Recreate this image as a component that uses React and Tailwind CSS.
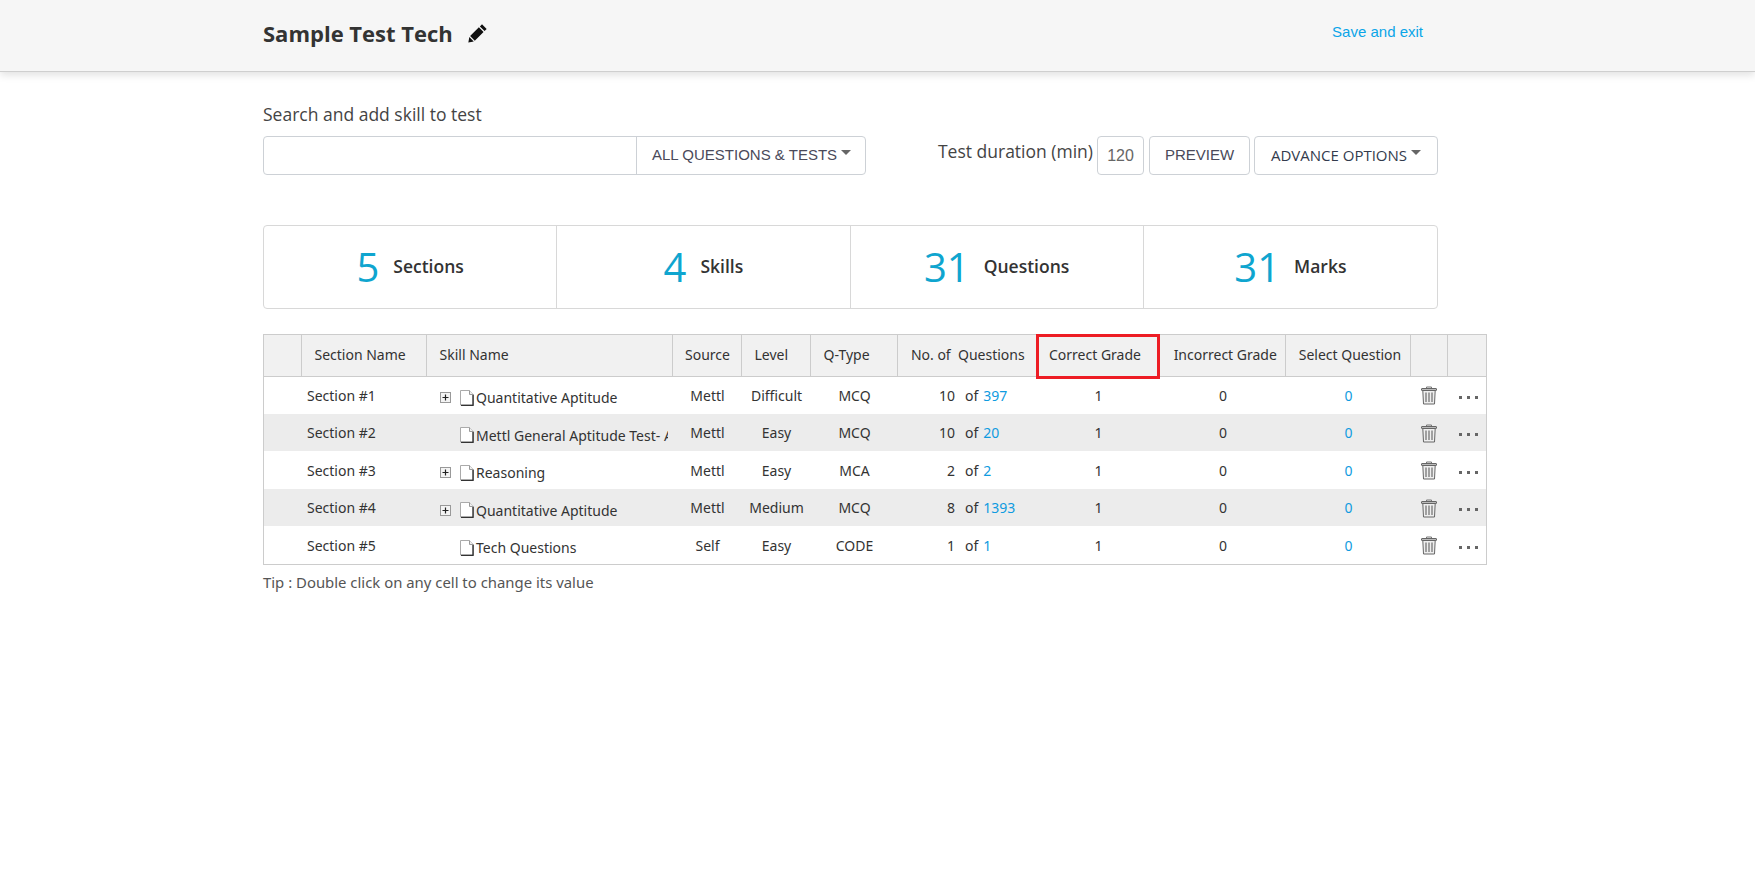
import React from 'react';

const rows = [
  { section: 'Section #1', skill: 'Quantitative Aptitude', tree: true, source: 'Mettl', level: 'Difficult', type: 'MCQ', count: 10, total: 397, h: 'h-[38px]' },
  { section: 'Section #2', skill: 'Mettl General Aptitude Test- Aptitude', tree: false, source: 'Mettl', level: 'Easy', type: 'MCQ', count: 10, total: 20, h: 'h-[37px]' },
  { section: 'Section #3', skill: 'Reasoning', tree: true, source: 'Mettl', level: 'Easy', type: 'MCA', count: 2, total: 2, h: 'h-[38px]' },
  { section: 'Section #4', skill: 'Quantitative Aptitude', tree: true, source: 'Mettl', level: 'Medium', type: 'MCQ', count: 8, total: 1393, h: 'h-[37px]' },
  { section: 'Section #5', skill: 'Tech Questions', tree: false, source: 'Self', level: 'Easy', type: 'CODE', count: 1, total: 1, h: 'h-[38px]' },
];

const stats = [
  { value: 5, label: 'Sections' },
  { value: 4, label: 'Skills' },
  { value: 31, label: 'Questions' },
  { value: 31, label: 'Marks' },
];

const Caret = () => (
  <span className="inline-block w-0 h-0 border-x-[5px] border-x-transparent border-t-[5px] border-t-[#666] mb-[6px]" />
);

const Pencil = () => (
  <svg width="20" height="20" viewBox="0 0 18 18">
    <path fill="#111" d="M12.6 1.2l4.2 4.2-1.9 1.9-4.2-4.2zM9.8 3.9l4.2 4.2-7.9 7.9-4.2-4.2zM1.2 12.7l4 4-4.9.9z" />
  </svg>
);

const PlusBox = () => (
  <svg width="11" height="11" viewBox="0 0 11 11" className="shrink-0">
    <rect x="0.5" y="0.5" width="10" height="10" fill="#f4f4f4" stroke="#999" />
    <path d="M2.5 5.5h6M5.5 2.5v6" stroke="#222" strokeWidth="1.2" />
  </svg>
);

const Doc = () => (
  <svg width="14" height="16" viewBox="0 0 14 16" className="shrink-0">
    <path d="M.5.5h9l4 4v10.5h-13z" fill="#fff" stroke="#aaa" />
    <path d="M13 5v10.500H1" fill="none" stroke="#333" strokeWidth="1.400" />
    <path d="M9.500.5v4h4" fill="#eee" stroke="#999" />
  </svg>
);

const Trash = () => (
  <svg width="16" height="19" viewBox="0 0 16 19" className="mx-auto mt-[1px]">
    <path d="M5.500 2.500v-1.500h5v1.500" fill="none" stroke="#777" />
    <rect x="0.500" y="2.500" width="15" height="2" rx="0.500" fill="#bbb" stroke="#666" />
    <path d="M1.800 4.500l.7 13.500h11l.7-13.500z" fill="#eee" stroke="#666" />
    <path d="M5 6.500v9.500M8 6.500v9.500M11 6.500v9.500" stroke="#777" strokeWidth="1.300" />
  </svg>
);

const Dots = () => (
  <div className="flex justify-center gap-[5px] mt-[4px] pl-[3px]">
    <span className="w-[3px] h-[3px] bg-[#666]" />
    <span className="w-[3px] h-[3px] bg-[#666]" />
    <span className="w-[3px] h-[3px] bg-[#666]" />
  </div>
);

const Th = ({ className = '', children }) => (
  <th className={`font-normal border-r border-[#ccc] text-[14px] text-[#333] whitespace-nowrap pb-[2px] ${className}`}>{children}</th>
);

export default function App() {
  return (
    <div className="min-h-[873px] bg-white text-[#333] font-['Noto_Sans','Open_Sans',sans-serif]">
      <header className="h-[72px] bg-[#f6f6f6] border-b border-[#cfcfcf] shadow-[0_3px_8px_rgba(0,0,0,0.12)]">
        <div className="ml-[263px] w-[1160px] h-full flex items-center justify-between">
          <div className="flex items-center gap-[15px] mb-[5px]">
            <h1 className="font-['Open_Sans',sans-serif] font-bold text-[22px] text-[#333] leading-none">Sample Test Tech</h1>
            <Pencil />
          </div>
          <a className="font-['Liberation_Sans',sans-serif] text-[15px] text-[#0aa5e8] mb-[6px]">Save and exit</a>
        </div>
      </header>

      <main className="ml-[263px] w-[1224px]">
        <div className="pt-[30px] font-['Open_Sans',sans-serif] text-[17.500px] leading-[24px] text-[#444]">Search and add skill to test</div>

        <div className="mt-[10px] w-[1175px] h-[39px] flex items-stretch">
          <div className="w-[603px] flex border border-[#cdd1d6] rounded-[4px]">
            <input className="w-[373px] border-r border-[#cdd1d6] outline-none bg-transparent" />
            <div className="flex-1 flex items-center pl-[15px] gap-[4px] font-['Liberation_Sans',sans-serif] text-[15px] text-[#4a4a5a]">
              ALL QUESTIONS &amp; TESTS <Caret />
            </div>
          </div>
          <div className="ml-auto flex items-stretch">
            <span className="self-center mb-[9px] mr-[4px] font-['Open_Sans',sans-serif] text-[17.500px] text-[#444]">Test duration (min)</span>
            <div className="w-[47px] flex items-center justify-center border border-[#cdd1d6] rounded-[4px] font-['Liberation_Sans',sans-serif] text-[16px] text-[#666]">120</div>
            <div className="ml-[5px] w-[101px] flex items-center justify-center border border-[#cdd1d6] rounded-[4px] font-['Liberation_Sans',sans-serif] text-[15px] text-[#4a4a5a]">PREVIEW</div>
            <div className="ml-[4px] w-[184px] flex items-center justify-center gap-[4px] border border-[#cdd1d6] rounded-[4px] font-['Open_Sans',sans-serif] text-[15px] text-[#333b4d]">
              ADVANCE OPTIONS <Caret />
            </div>
          </div>
        </div>

        <div className="mt-[50px] w-[1175px] h-[84px] grid grid-cols-4 border border-[#d8d8d8] rounded-[4px]">
          {stats.map((s, i) => (
            <div key={s.label} className={`flex items-center justify-center gap-[14px] font-['Open_Sans',sans-serif] ${i < 3 ? 'border-r border-[#d8d8d8]' : ''}`}>
              <span className="text-[40px] leading-none text-[#0fa5cf]">{s.value}</span>
              <span className="text-[17.500px] font-semibold text-[#333] mb-[1px]">{s.label}</span>
            </div>
          ))}
        </div>

        <div className="relative mt-[25px] border border-[#ccc]">
          <table className="w-[1222px] table-fixed border-collapse text-[14px]">
            <colgroup>
              <col className="w-[37px]" />
              <col className="w-[125px]" />
              <col className="w-[246px]" />
              <col className="w-[69px]" />
              <col className="w-[69px]" />
              <col className="w-[87px]" />
              <col className="w-[139px]" />
              <col className="w-[123px]" />
              <col className="w-[126px]" />
              <col className="w-[125px]" />
              <col className="w-[37px]" />
              <col className="w-[39px]" />
            </colgroup>
            <thead>
              <tr className="h-[41px] bg-[#f1f1f1] border-b border-[#ccc]">
                <Th />
                <Th className="text-left pl-[13px]">Section Name</Th>
                <Th className="text-left pl-[13px]">Skill Name</Th>
                <Th className="text-center pl-[2px]">Source</Th>
                <Th className="text-left pl-[13px]">Level</Th>
                <Th className="text-left pl-[13px]">Q-Type</Th>
                <Th className="text-center border-r-0 pl-[2px]">No. of&nbsp; Questions</Th>
                <Th className="text-left pl-[13px] border-r-0">Correct Grade</Th>
                <Th className="text-center pl-[7px]">Incorrect Grade</Th>
                <Th className="text-center pl-[5px]">Select Question</Th>
                <Th />
                <Th className="border-r-0" />
              </tr>
            </thead>
            <tbody>
              {rows.map((r, i) => (
                <tr key={r.section} className={`${r.h} ${i % 2 === 1 ? 'bg-[#ececec]' : 'bg-white'} text-[#333]`}>
                  <td />
                  <td className="pl-[6px]">{r.section}</td>
                  <td className="pl-[14px] pr-[4px]">
                    <div className="flex items-center mt-[5px] overflow-hidden whitespace-nowrap">
                      {r.tree ? <PlusBox /> : <span className="w-[11px] shrink-0" />}
                      <span className="ml-[9px] flex"><Doc /></span>
                      <span className="ml-[2px]">{r.skill}</span>
                    </div>
                  </td>
                  <td className="text-center pl-[2px]">{r.source}</td>
                  <td className="text-center pl-[2px]">{r.level}</td>
                  <td className="text-center pl-[2px]">{r.type}</td>
                  <td>
                    <div className="flex">
                      <span className="w-[58px] text-right">{r.count}</span>
                      <span className="ml-[10px]">of</span>
                      <span className="ml-[5px] text-[#0f9be0]">{r.total}</span>
                    </div>
                  </td>
                  <td className="text-center pl-[2px]">1</td>
                  <td className="text-center pl-[2px]">0</td>
                  <td className="text-center pl-[2px] text-[#0f9be0]">0</td>
                  <td><Trash /></td>
                  <td><Dots /></td>
                </tr>
              ))}
            </tbody>
          </table>
          <div className="absolute left-[772px] top-[-1px] w-[124px] h-[45px] border-[3px] border-[#ed1c24]" />
        </div>

        <p className="mt-[7px] text-[14.900px] leading-[20px] text-[#555]">Tip : Double click on any cell to change its value</p>
      </main>
    </div>
  );
}
